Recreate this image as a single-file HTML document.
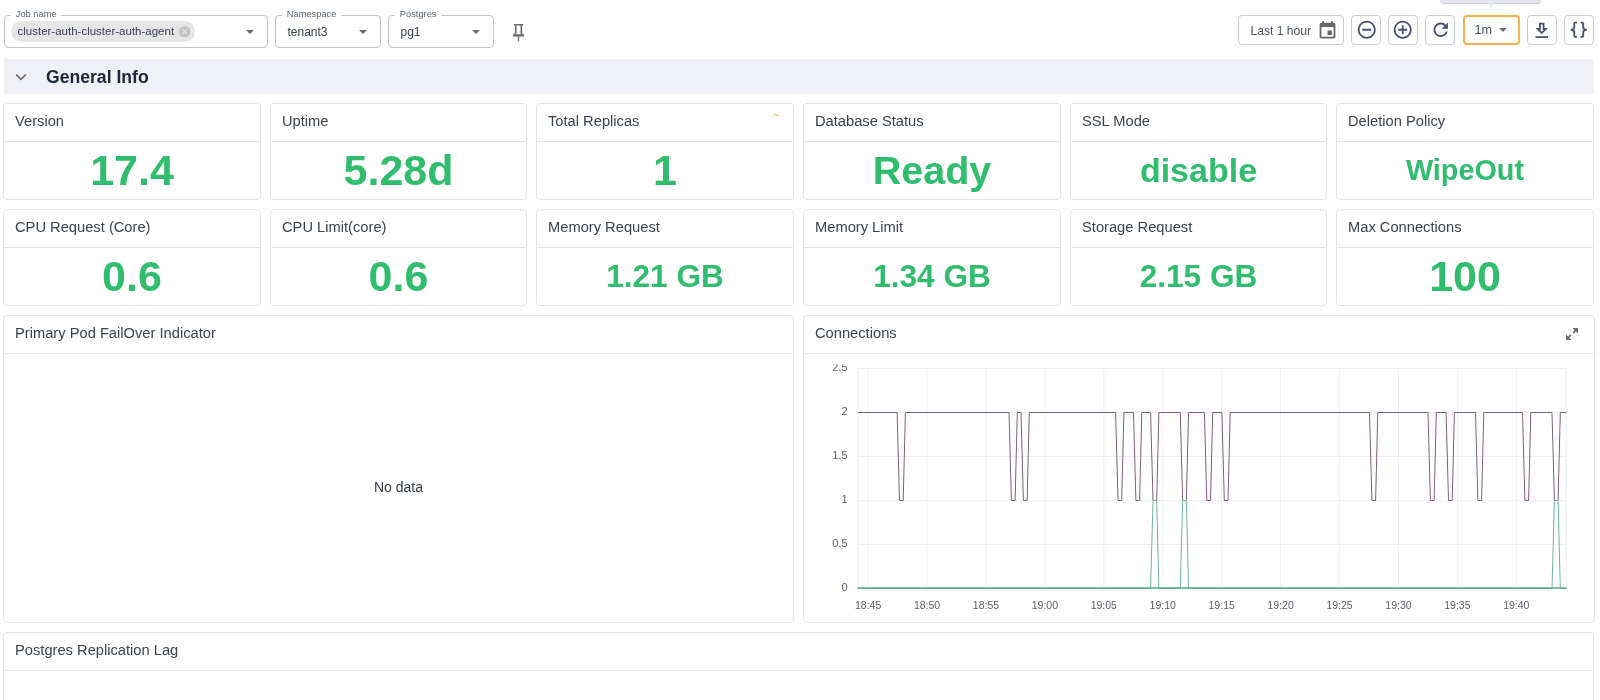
<!DOCTYPE html>
<html><head><meta charset="utf-8">
<style>
*{box-sizing:border-box;margin:0;padding:0}
html,body{width:1600px;height:700px;overflow:hidden;background:#fff;font-family:"Liberation Sans",sans-serif;color:#333c4d}
.vbox{position:absolute;top:15px;height:33px;border:1px solid #c4c4c4;border-radius:4px;background:#fff}
.vlabel{position:absolute;top:-8.5px;left:6.3px;padding:0 4.5px;background:#fff;font-size:9.3px;color:#5d6478;line-height:12px;white-space:nowrap}
.vval{position:absolute;left:11.5px;top:9px;font-size:12px;line-height:14px;color:#3a4150;white-space:nowrap}
.caret{position:absolute;top:14px;width:0;height:0;border-left:4.5px solid transparent;border-right:4.5px solid transparent;border-top:4.5px solid #6b6b6b}
.chip{position:absolute;left:6px;top:5px;height:21px;border-radius:11px;background:#e6e6e6;font-size:11.5px;line-height:20.5px;padding-left:6.5px;width:184px;color:#3a4150;white-space:nowrap}
.btn{position:absolute;top:15px;height:30px;border:1px solid #c9ccd6;border-radius:4px;background:#fff}
.btn svg{position:absolute}
.sec{position:absolute;left:4px;top:59px;width:1590px;height:35px;background:#eff1f6}
.panel{position:absolute;border:1px solid #e3e3e3;border-radius:4px;background:#fff}
.ptitle{position:absolute;left:11px;top:9px;font-size:14.7px;line-height:17px;color:#3b4252;white-space:nowrap}
.phead{position:absolute;left:0;right:0;top:0;border-bottom:1px solid #e3e3e3}
.sval{position:absolute;left:0;right:0;text-align:center;font-weight:bold;color:#30bd6d;white-space:nowrap}
</style></head><body><div style="position:absolute;left:0;top:0;width:1600px;height:700px;will-change:transform">
<div class="vbox" style="left:4px;width:264px">
  <div class="vlabel">Job name</div>
  <div class="chip">cluster-auth-cluster-auth-agent<svg style="position:absolute;left:166.6px;top:4px" width="13.5" height="13.5" viewBox="0 0 24 24"><path fill="#c2c2c2" d="M12 2C6.47 2 2 6.47 2 12s4.47 10 10 10 10-4.47 10-10S17.53 2 12 2zm5 13.59L15.59 17 12 13.41 8.41 17 7 15.59 10.59 12 7 8.41 8.41 7 12 10.59 15.59 7 17 8.41 13.41 12 17 15.59z"/></svg></div>
  <div class="caret" style="left:241px"></div>
</div>
<div class="vbox" style="left:275px;width:106px">
  <div class="vlabel">Namespace</div>
  <div class="vval">tenant3</div>
  <div class="caret" style="left:83px"></div>
</div>
<div class="vbox" style="left:388px;width:106px">
  <div class="vlabel">Postgres</div>
  <div class="vval">pg1</div>
  <div class="caret" style="left:83px"></div>
</div>
<svg style="position:absolute;left:508px;top:20px" width="20" height="24" viewBox="0 0 20 24"><path fill="#6b6b6b" d="M5.8 3.9h9.4v1.6h-1.1v7.6l1.9 1.9v1.5H5v-1.5l1.9-1.9V5.5H5.8z M8.5 5.5v7.9l-1 0.9h6l-1-0.9V5.5z"/><rect x="9.8" y="16" width="1.4" height="5.2" fill="#6b6b6b"/></svg>
<div class="btn" style="left:1238px;width:106px"><div style="position:absolute;left:11.5px;top:7.5px;font-size:12.1px;line-height:14px;color:#4a5060;white-space:nowrap">Last 1 hour</div></div>
<div class="btn" style="left:1351px;width:30px"></div>
<div class="btn" style="left:1388px;width:30px"></div>
<div class="btn" style="left:1425px;width:30px"></div>
<div class="btn" style="left:1463px;width:57px;border:2px solid #f6b04f"><div style="position:absolute;left:9.5px;top:6px;font-size:12.6px;line-height:14px;color:#4a5060">1m</div><div class="caret" style="left:33.5px;top:10.5px;border-left-width:4px;border-right-width:4px;border-top-width:4.5px"></div></div>
<div class="btn" style="left:1527px;width:30px"></div>
<div class="btn" style="left:1564px;width:30px"></div>
<svg style="position:absolute;left:1316.8px;top:20.1px" width="21" height="21" viewBox="0 0 24 24"><path fill="#666" d="M17 12h-5v5h5v-5zM16 1v2H8V1H6v2H5c-1.11 0-1.99.9-1.99 2L3 19c0 1.1.89 2 2 2h14c1.1 0 2-.9 2-2V5c0-1.1-.9-2-2-2h-1V1h-2zm3 18H5V8h14v11z"/></svg><svg style="position:absolute;left:1355.5px;top:19.15px" width="21.5" height="21.5" viewBox="0 0 24 24"><path fill="#4a4f72" d="M7 11v2h10v-2H7zm5-9C6.48 2 2 6.48 2 12s4.48 10 10 10 10-4.48 10-10S17.52 2 12 2zm0 18c-4.41 0-8-3.59-8-8s3.59-8 8-8 8 3.59 8 8-3.59 8-8 8z"/></svg><svg style="position:absolute;left:1392.35px;top:19.15px" width="21.5" height="21.5" viewBox="0 0 24 24"><path fill="#4a4f72" d="M13 7h-2v4H7v2h4v4h2v-4h4v-2h-4V7zm-1-5C6.48 2 2 6.48 2 12s4.48 10 10 10 10-4.48 10-10S17.52 2 12 2zm0 18c-4.41 0-8-3.59-8-8s3.59-8 8-8 8 3.59 8 8-3.59 8-8 8z"/></svg><svg style="position:absolute;left:1429.7px;top:19.3px" width="21.5" height="21.5" viewBox="0 0 24 24"><path fill="#4a4f72" d="M17.65 6.35C16.2 4.9 14.21 4 12 4c-4.42 0-7.99 3.58-7.99 8s3.57 8 7.99 8c3.73 0 6.84-2.55 7.73-6h-2.08c-.82 2.33-3.04 4-5.65 4-3.31 0-6-2.69-6-6s2.69-6 6-6c1.66 0 3.14.69 4.22 1.78L13 11h7V4l-2.35 2.35z"/></svg><svg style="position:absolute;left:1530.8px;top:19.7px" width="21.5" height="21.5" viewBox="0 0 24 24"><path fill="#4a4f72" d="M5 20h14v-2H5v2zM19 9h-4V3H9v6H5l7 7 7-7zm-8 2V5h2v6h1.17L12 13.17 9.83 11H11z"/></svg><svg style="position:absolute;left:1568.2px;top:19.3px" width="21.5" height="21.5" viewBox="0 0 24 24"><path fill="#4a4f72" d="M8,3A2,2 0 0,0 6,5V9A2,2 0 0,1 4,11H3V13H4A2,2 0 0,1 6,15V19A2,2 0 0,0 8,21H10V19H8V14A2,2 0 0,0 6,12A2,2 0 0,0 8,10V5H10V3M16,3A2,2 0 0,1 18,5V9A2,2 0 0,0 20,11H21V13H20A2,2 0 0,0 18,15V19A2,2 0 0,1 16,21H14V19H16V14A2,2 0 0,1 18,12A2,2 0 0,1 16,10V5H14V3H16Z"/></svg><div style="position:absolute;left:1440px;top:-11px;width:101px;height:14px;background:#e4e6ee;border-radius:4px;box-shadow:0 1px 1px rgba(0,0,0,0.22)"></div>
<div style="position:absolute;left:1486px;top:1px;width:0;height:0;border-left:5px solid transparent;border-right:5px solid transparent;border-top:6px solid #e4e6ee"></div>
<div class="sec"><svg style="position:absolute;left:11px;top:11.5px" width="12" height="12" viewBox="0 0 12 12"><path fill="none" stroke="#6b6b6b" stroke-width="1.7" d="M1.2 3.6l4.8 4.8 4.8-4.8"/></svg><div style="position:absolute;left:42px;top:8px;font-size:17.6px;line-height:20px;font-weight:bold;color:#1f2538">General Info</div></div>
<div class="panel" style="left:3px;top:103px;width:258px;height:97px"><div class="phead" style="height:38px"></div><div class="ptitle">Version</div><div class="sval" style="top:42.1px;font-size:43px;line-height:49.4px">17.4</div></div>
<div class="panel" style="left:270px;top:103px;width:257px;height:97px"><div class="phead" style="height:38px"></div><div class="ptitle">Uptime</div><div class="sval" style="top:42.1px;font-size:43px;line-height:49.4px">5.28d</div></div>
<div class="panel" style="left:536px;top:103px;width:258px;height:97px"><div class="phead" style="height:38px"></div><div class="ptitle">Total Replicas</div><div class="sval" style="top:41.6px;font-size:43px;line-height:49.4px">1</div></div>
<div class="panel" style="left:803px;top:103px;width:258px;height:97px"><div class="phead" style="height:38px"></div><div class="ptitle">Database Status</div><div class="sval" style="top:43.5px;font-size:39.5px;line-height:45.4px">Ready</div></div>
<div class="panel" style="left:1070px;top:103px;width:257px;height:97px"><div class="phead" style="height:38px"></div><div class="ptitle">SSL Mode</div><div class="sval" style="top:46.6px;font-size:34px;line-height:39.1px">disable</div></div>
<div class="panel" style="left:1336px;top:103px;width:258px;height:97px"><div class="phead" style="height:38px"></div><div class="ptitle">Deletion Policy</div><div class="sval" style="top:49.6px;font-size:28.8px;line-height:33.1px">WipeOut</div></div>
<div class="panel" style="left:3px;top:209px;width:258px;height:97px"><div class="phead" style="height:38px"></div><div class="ptitle">CPU Request (Core)</div><div class="sval" style="top:41.6px;font-size:43px;line-height:49.4px">0.6</div></div>
<div class="panel" style="left:270px;top:209px;width:257px;height:97px"><div class="phead" style="height:38px"></div><div class="ptitle">CPU Limit(core)</div><div class="sval" style="top:41.6px;font-size:43px;line-height:49.4px">0.6</div></div>
<div class="panel" style="left:536px;top:209px;width:258px;height:97px"><div class="phead" style="height:38px"></div><div class="ptitle">Memory Request</div><div class="sval" style="top:48.1px;font-size:31.6px;line-height:36.3px">1.21 GB</div></div>
<div class="panel" style="left:803px;top:209px;width:258px;height:97px"><div class="phead" style="height:38px"></div><div class="ptitle">Memory Limit</div><div class="sval" style="top:48.1px;font-size:31.6px;line-height:36.3px">1.34 GB</div></div>
<div class="panel" style="left:1070px;top:209px;width:257px;height:97px"><div class="phead" style="height:38px"></div><div class="ptitle">Storage Request</div><div class="sval" style="top:48.1px;font-size:31.6px;line-height:36.3px">2.15 GB</div></div>
<div class="panel" style="left:1336px;top:209px;width:258px;height:97px"><div class="phead" style="height:38px"></div><div class="ptitle">Max Connections</div><div class="sval" style="top:41.6px;font-size:43px;line-height:49.4px">100</div></div>
<svg style="position:absolute;left:770px;top:110px" width="14" height="10" viewBox="0 0 14 10"><path d="M4.3 4.7 Q6.6 4.7 8.8 6.0" fill="none" stroke="#f5bf6a" stroke-width="1.2" stroke-linecap="round"/></svg><div class="panel" style="left:3px;top:315px;width:791px;height:308px"><div class="phead" style="height:38px"></div><div class="ptitle">Primary Pod FailOver Indicator</div><div style="position:absolute;left:0;right:0;top:163px;text-align:center;font-size:14px;line-height:16px;color:#333a48">No data</div></div>
<div class="panel" style="left:803px;top:315px;width:792px;height:308px"><div class="phead" style="height:38px"></div><div class="ptitle">Connections</div><svg style="position:absolute;left:-1px;top:-1px" width="790" height="307" viewBox="0 0 790 307"><line x1="65.10" y1="53" x2="65.10" y2="273" stroke="#efeff2" stroke-width="1"/><line x1="124.03" y1="53" x2="124.03" y2="273" stroke="#efeff2" stroke-width="1"/><line x1="182.96" y1="53" x2="182.96" y2="273" stroke="#efeff2" stroke-width="1"/><line x1="241.89" y1="53" x2="241.89" y2="273" stroke="#efeff2" stroke-width="1"/><line x1="300.82" y1="53" x2="300.82" y2="273" stroke="#efeff2" stroke-width="1"/><line x1="359.75" y1="53" x2="359.75" y2="273" stroke="#efeff2" stroke-width="1"/><line x1="418.68" y1="53" x2="418.68" y2="273" stroke="#efeff2" stroke-width="1"/><line x1="477.61" y1="53" x2="477.61" y2="273" stroke="#efeff2" stroke-width="1"/><line x1="536.54" y1="53" x2="536.54" y2="273" stroke="#efeff2" stroke-width="1"/><line x1="595.47" y1="53" x2="595.47" y2="273" stroke="#efeff2" stroke-width="1"/><line x1="654.40" y1="53" x2="654.40" y2="273" stroke="#efeff2" stroke-width="1"/><line x1="713.33" y1="53" x2="713.33" y2="273" stroke="#efeff2" stroke-width="1"/><line x1="54.70" y1="229.5" x2="763.30" y2="229.5" stroke="#efeff2" stroke-width="1"/><line x1="54.70" y1="185.5" x2="763.30" y2="185.5" stroke="#efeff2" stroke-width="1"/><line x1="54.70" y1="141.5" x2="763.30" y2="141.5" stroke="#efeff2" stroke-width="1"/><line x1="54.70" y1="97.5" x2="763.30" y2="97.5" stroke="#efeff2" stroke-width="1"/><line x1="54.70" y1="53.5" x2="763.30" y2="53.5" stroke="#efeff2" stroke-width="1"/><line x1="54.70" y1="53" x2="54.70" y2="273" stroke="#efeff2" stroke-width="1"/><line x1="763.30" y1="53" x2="763.30" y2="273" stroke="#efeff2" stroke-width="1"/><text x="44.5" y="276.2" text-anchor="end" font-size="11" fill="#5a5e66" font-family="Liberation Sans">0</text><text x="44.5" y="232.2" text-anchor="end" font-size="11" fill="#5a5e66" font-family="Liberation Sans">0.5</text><text x="44.5" y="188.2" text-anchor="end" font-size="11" fill="#5a5e66" font-family="Liberation Sans">1</text><text x="44.5" y="144.2" text-anchor="end" font-size="11" fill="#5a5e66" font-family="Liberation Sans">1.5</text><text x="44.5" y="100.2" text-anchor="end" font-size="11" fill="#5a5e66" font-family="Liberation Sans">2</text><svg x="0" y="49.6" width="100" height="30" viewBox="0 49.6 100 30" overflow="hidden"><text x="44.5" y="56.2" text-anchor="end" font-size="11" fill="#5a5e66" font-family="Liberation Sans">2.5</text></svg><text x="65.10" y="294" text-anchor="middle" font-size="10.5" fill="#5a5e66" font-family="Liberation Sans">18:45</text><text x="124.03" y="294" text-anchor="middle" font-size="10.5" fill="#5a5e66" font-family="Liberation Sans">18:50</text><text x="182.96" y="294" text-anchor="middle" font-size="10.5" fill="#5a5e66" font-family="Liberation Sans">18:55</text><text x="241.89" y="294" text-anchor="middle" font-size="10.5" fill="#5a5e66" font-family="Liberation Sans">19:00</text><text x="300.82" y="294" text-anchor="middle" font-size="10.5" fill="#5a5e66" font-family="Liberation Sans">19:05</text><text x="359.75" y="294" text-anchor="middle" font-size="10.5" fill="#5a5e66" font-family="Liberation Sans">19:10</text><text x="418.68" y="294" text-anchor="middle" font-size="10.5" fill="#5a5e66" font-family="Liberation Sans">19:15</text><text x="477.61" y="294" text-anchor="middle" font-size="10.5" fill="#5a5e66" font-family="Liberation Sans">19:20</text><text x="536.54" y="294" text-anchor="middle" font-size="10.5" fill="#5a5e66" font-family="Liberation Sans">19:25</text><text x="595.47" y="294" text-anchor="middle" font-size="10.5" fill="#5a5e66" font-family="Liberation Sans">19:30</text><text x="654.40" y="294" text-anchor="middle" font-size="10.5" fill="#5a5e66" font-family="Liberation Sans">19:35</text><text x="713.33" y="294" text-anchor="middle" font-size="10.5" fill="#5a5e66" font-family="Liberation Sans">19:40</text><path d="M54.70 97.50 L94.10 97.50 L96.50 185.50 L100.20 185.50 L102.40 97.50 L206.00 97.50 L208.40 185.50 L212.10 185.50 L214.30 97.50 L218.00 97.50 L220.40 185.50 L224.10 185.50 L226.30 97.50 L312.60 97.50 L315.00 185.50 L318.70 185.50 L320.90 97.50 L330.50 97.50 L332.90 185.50 L336.60 185.50 L338.80 97.50 L347.60 97.50 L350.00 185.50 L353.70 185.50 L355.90 97.50 L377.25 97.50 L379.65 185.50 L383.35 185.50 L385.55 97.50 L401.40 97.50 L403.80 185.50 L407.50 185.50 L409.70 97.50 L418.90 97.50 L421.30 185.50 L425.00 185.50 L427.20 97.50 L566.50 97.50 L568.90 185.50 L572.60 185.50 L574.80 97.50 L625.00 97.50 L627.40 185.50 L631.10 185.50 L633.30 97.50 L643.10 97.50 L645.50 185.50 L649.20 185.50 L651.40 97.50 L672.50 97.50 L674.90 185.50 L678.60 185.50 L680.80 97.50 L719.50 97.50 L721.90 185.50 L725.60 185.50 L727.80 97.50 L749.00 97.50 L751.40 185.50 L755.10 185.50 L757.30 97.50 L763.30 97.50" fill="none" stroke="#7f5f78" stroke-width="1" stroke-linejoin="miter"/><path d="M54.70 273.50 L347.60 273.50 L350.00 185.50 L353.70 185.50 L355.90 273.50 L377.25 273.50 L379.65 185.50 L383.35 185.50 L385.55 273.50 L749.00 273.50 L751.40 185.50 L755.10 185.50 L757.30 273.50 L763.30 273.50" fill="none" stroke="#6db59c" stroke-width="1"/><line x1="54.70" y1="273" x2="763.30" y2="273" stroke="#5ea78e" stroke-width="1.7"/></svg><svg style="position:absolute;left:760.6px;top:11px" width="14" height="14" viewBox="0 0 14 14"><path fill="#6b6b6b" d="M7.5 1h5.5v5.5l-2-2-2.2 2.2-1.3-1.3 2.2-2.2zM6.5 13H1V7.5l2 2 2.2-2.2 1.3 1.3-2.2 2.2z"/></svg></div>
<div class="panel" style="left:3px;top:632px;width:1591px;height:200px"><div class="phead" style="height:38px"></div><div class="ptitle">Postgres Replication Lag</div></div>
</div></body></html>
